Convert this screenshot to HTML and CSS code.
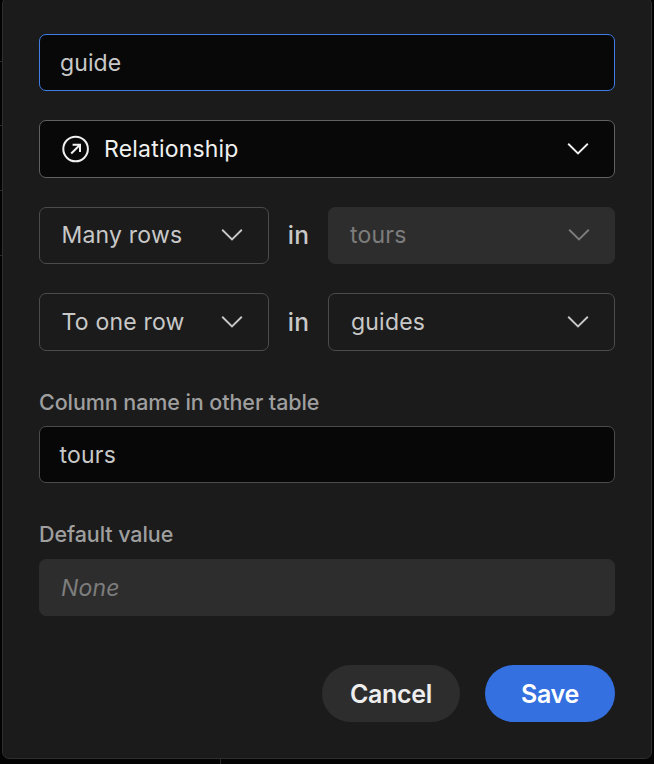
FILE: index.html
```html
<!DOCTYPE html>
<html lang="en">
<head>
<meta charset="utf-8">
<title>Edit column</title>
<link rel="stylesheet" href="styles.css">
</head>
<body>
<svg class="backdrop" width="654" height="764" fill="none" stroke="#292929"><path d="M0 61.5H2M0 125.5H2M0 190.5H2M0 255.5H2M220.5 759V764"/></svg>
<form class="panel">
  <div class="field field-focus"><span>guide</span></div>
  <div class="field field-type">
    <svg class="icon" width="28" height="28" viewBox="0 0 28 28" fill="none" stroke="currentColor" stroke-width="2"><circle cx="13.6" cy="14" r="12.3"/><path d="M9.2 18.5L17.8 10M10.6 9.8H18V17"/></svg>
    <span>Relationship</span>
    <svg class="chevron" width="22" height="14" viewBox="0 0 22 14"><path d="M1.2 1.8L11 11.4L20.8 1.8"/></svg>
  </div>
  <div class="row row-many">
    <div class="field select"><span>Many rows</span><svg class="chevron" width="22" height="14" viewBox="0 0 22 14"><path d="M1.2 1.8L11 11.4L20.8 1.8"/></svg></div>
    <span class="in">in</span>
    <div class="field select disabled"><span>tours</span><svg class="chevron" width="22" height="14" viewBox="0 0 22 14"><path d="M1.2 1.8L11 11.4L20.8 1.8"/></svg></div>
  </div>
  <div class="row row-one">
    <div class="field select"><span>To one row</span><svg class="chevron" width="22" height="14" viewBox="0 0 22 14"><path d="M1.2 1.8L11 11.4L20.8 1.8"/></svg></div>
    <span class="in">in</span>
    <div class="field select select-target"><span>guides</span><svg class="chevron" width="22" height="14" viewBox="0 0 22 14"><path d="M1.2 1.8L11 11.4L20.8 1.8"/></svg></div>
  </div>
  <div class="label label-column">Column name in other table</div>
  <div class="field field-column"><span>tours</span></div>
  <div class="label label-default">Default value</div>
  <div class="field disabled field-default"><span>None</span></div>
  <div class="actions">
    <button type="button" class="button cancel">Cancel</button>
    <button type="button" class="button save">Save</button>
  </div>
</form>
</body>
</html>
```
FILE: styles.css
```css
* { box-sizing: border-box; }
html, body { margin: 0; height: 100%; overflow: hidden; }
body {
  background: #030303;
  color: #c8c8c8;
  font-family: Inter, "Liberation Sans", sans-serif;
  font-size: 23px;
  letter-spacing: 0.2px;
}
.backdrop { position: absolute; top: 0; left: 0; }
.panel {
  position: relative;
  width: 650px;
  height: 762px;
  margin: -3px 0 0 2px;
  padding: 36px 36px 0;
  background: #1b1b1b;
  border: 1px solid #2e2e2e;
  border-radius: 7px;
}
.field {
  display: flex;
  align-items: center;
  height: 57px;
  padding: 0 25px 0 20px;
  border: 1px solid #4b4b4b;
  border-radius: 7px;
  line-height: 28px;
  white-space: nowrap;
}
.field-focus { background: #080808; border-color: #3f7ee4; margin-bottom: 29px; letter-spacing: 0.1px; }
.field-type { height: 58px; background: #080808; border-color: #616161; color: #f0f0f0; margin-bottom: 29px; padding-left: 22px; }
.field-column { background: #070707; padding-left: 19.5px; }
.field-default { padding-left: 21px; font-style: italic; }
.icon { margin-right: 14px; }
.chevron { margin-left: auto; fill: none; stroke: currentColor; stroke-width: 1.9; }
.row { display: grid; grid-template-columns: 230px 59px 287px; align-items: center; }
.row-many { margin-bottom: 29px; }
.row-many .field { padding-bottom: 1px; }
.row-one .field { height: 58px; }
.select { padding-left: 21.5px; }
.select-target { padding-left: 22px; }
.disabled { background: #2d2d2d; border-color: #2d2d2d; color: #7d7d7d; }
.select.disabled { padding-left: 21px; padding-right: 24px; }
.in { text-align: center; font-weight: 500; font-size: 24.5px; line-height: 28px; padding-bottom: 1px; }
.label { color: #9f9f9f; font-size: 21.5px; font-weight: 450; line-height: 28px; letter-spacing: -0.08px; }
.label-column { margin: 37px 0 10px; }
.label-default { margin: 37px 0 11px; }
.actions { display: flex; justify-content: flex-end; gap: 25px; margin-top: 49px; }
.button {
  height: 57px;
  border: 0;
  border-radius: 29px;
  padding: 0;
  font: 600 25px Inter, "Liberation Sans", sans-serif;
  letter-spacing: -0.3px;
}
.cancel { width: 138px; background: #2d2d2d; color: #eee; }
.save { width: 130px; background: #3470df; color: #fff; }
```
